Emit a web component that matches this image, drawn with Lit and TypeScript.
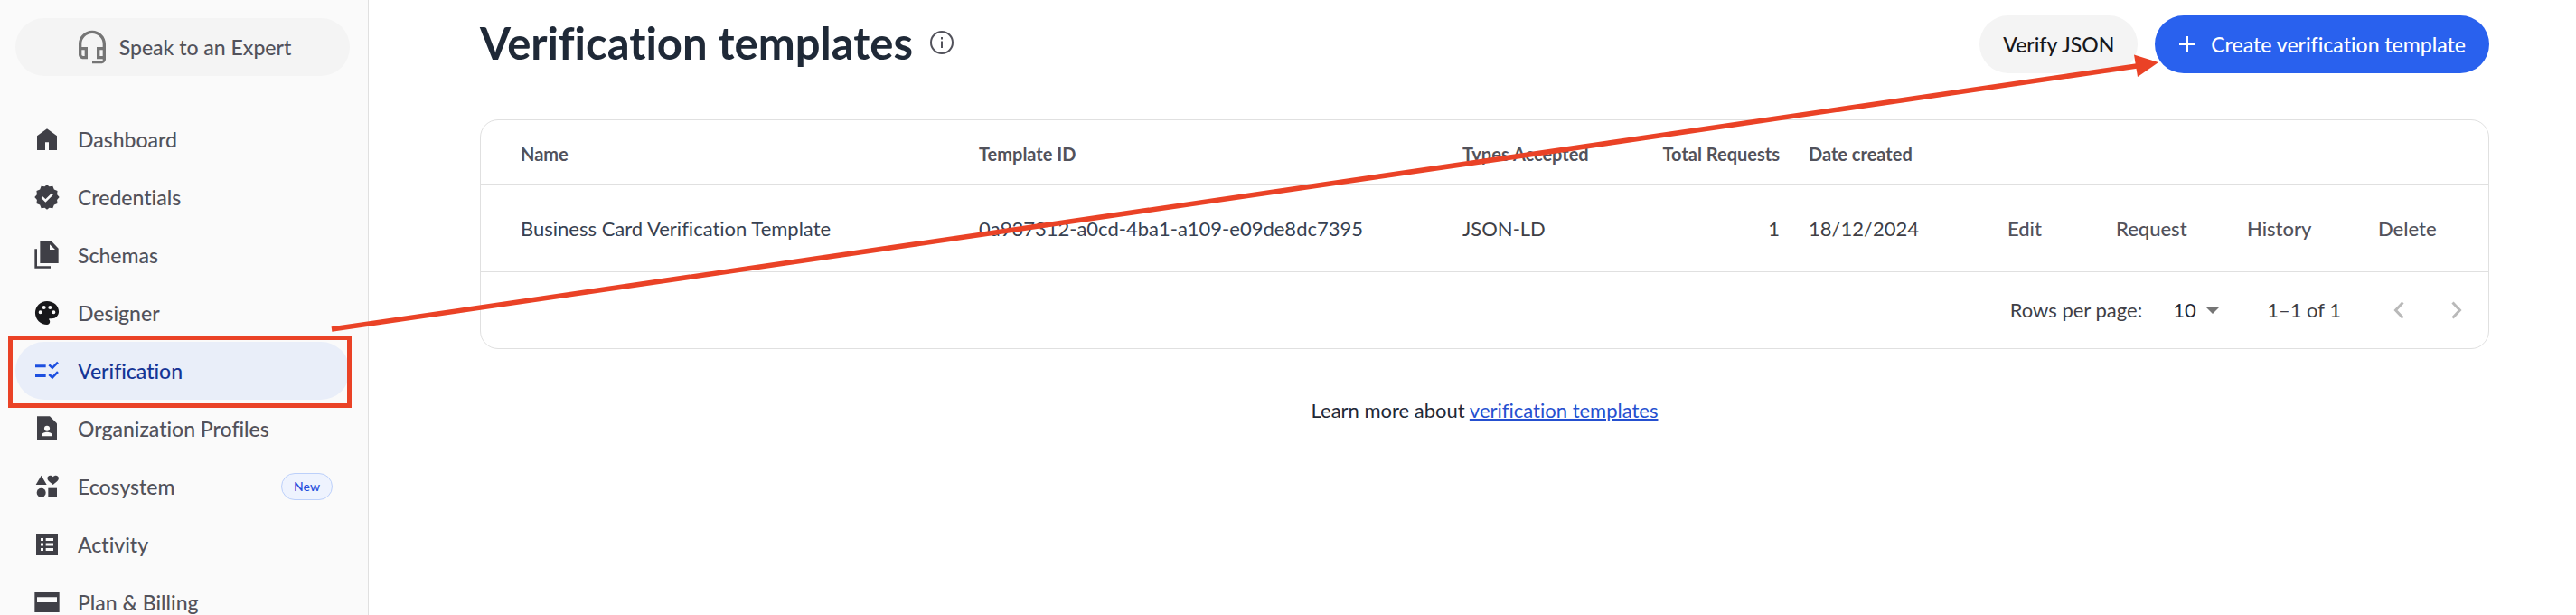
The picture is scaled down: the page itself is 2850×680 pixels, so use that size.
import { LitElement, html, css, svg, nothing } from 'lit';
import type { SVGTemplateResult } from 'lit';
import { customElement, property } from 'lit/decorators.js';
import { classMap } from 'lit/directives/class-map.js';

interface NavItem {
  label: string;
  icon: string;
  active?: boolean;
  badge?: string;
}

const NAV: NavItem[] = [
  { label: 'Dashboard', icon: 'home' },
  { label: 'Credentials', icon: 'verified' },
  { label: 'Schemas', icon: 'files' },
  { label: 'Designer', icon: 'palette' },
  { label: 'Verification', icon: 'rule', active: true },
  { label: 'Organization Profiles', icon: 'profile' },
  { label: 'Ecosystem', icon: 'shapes', badge: 'New' },
  { label: 'Activity', icon: 'list' },
  { label: 'Plan & Billing', icon: 'card' },
];

const ICONS: Record<string, SVGTemplateResult> = {
  home: svg`<path d="M3.75 21V9.25L12 3.25l8.25 6V21H13.5v-6.5h-3V21z"/>`,
  verified: svg`<path transform="translate(.8 .8) scale(.933)" d="M23 12l-2.1-2.5.4-3.2-3-1.2-1.2-3-3.1.4L12 .9 9.9 2.5 6.9 2.1 5.7 5.1l-3 1.2.4 3.2L1 12l2.1 2.5-.4 3.2 3 1.2 1.2 3 3.1-.4L12 23l2.1-1.5 3 .4 1.2-3 3-1.2-.4-3.2z"/><path d="M7.9 12.1l2.9 2.8 5.6-5.5" fill="none" stroke="#fafafa" stroke-width="1.9"/>`,
  files: svg`<path fill-rule="evenodd" d="M6.25.5h9.5l5.75 6v12.25H6.25zM14.25 3.25v4.25h4.5z"/><path d="M1.75 7h2v14.25H15V23H1.75z"/>`,
  palette: svg`<path fill="#18181b" d="M12 2.2C6.5 2.2 2.2 6.6 2.2 12s4.4 9.7 9.8 9.7c1.4 0 2.4-1.1 2.4-2.4 0-.6-.2-1.2-.6-1.6-.1-.1-.2-.3-.2-.4 0-.3.2-.6.5-.6H16c3.3 0 5.8-2.6 5.8-5.8 0-4.9-4.4-8.700-9.800-8.700zM6.500 13a1.500 1.500 0 110-3 1.500 1.500 0 010 3zm3-4a1.500 1.500 0 110-3 1.500 1.500 0 010 3zm5 0a1.500 1.500 0 110-3 1.500 1.500 0 010 3zm3 4a1.500 1.500 0 110-3 1.500 1.500 0 010 3z"/>`,
  rule: svg`<path d="M2.25 7H11v2.25H2.25zM2.25 15H11v2.25H2.25z"/><path d="M13.75 7l2.7 2.6L21 4.9M13.75 15l2.7 2.6L21 12.9" fill="none" stroke="currentColor" stroke-width="1.9"/>`,
  profile: svg`<path d="M3.75 1.75h10.5l6 6v14H3.75z"/><circle cx="12" cy="11.8" r="2.3" fill="#fafafa"/><path fill="#fafafa" d="M7.75 18.25v-1c0-1.7 2.5-2.5 4.25-2.5s4.25.8 4.25 2.5v1z"/>`,
  shapes: svg`<path d="M7.25 2.75l4.5 7.75h-9z"/><path d="M17 10.5l-.8-.7C13.7 7.7 12.3 6.7 12.3 5.1c0-1.3 1-2.3 2.4-2.3.8 0 1.7.4 2.3 1.1.6-.7 1.5-1.1 2.3-1.1 1.4 0 2.4 1 2.4 2.3 0 1.6-1.4 2.6-3.9 4.7z"/><circle cx="7.25" cy="17" r="3.75"/><path d="M13 13.25h7.25v7.25H13z"/>`,
  list: svg`<path d="M3 3h18v18H3z"/><path fill="#fafafa" d="M6.75 6.75H9v2.25H6.75zM6.75 10.9H9v2.25H6.75zM6.75 15H9v2.25H6.75zM11 6.75h6.25v2.25H11zM11 10.9h6.25v2.25H11zM11 15h6.25v2.25H11z"/>`,
  card: svg`<path fill-rule="evenodd" d="M1.75 3.75h20.5v16.5H1.75zM3.75 7.75V12h16.5V7.75z"/>`,
};

@customElement('side-nav')
class SideNav extends LitElement {
  static styles = css`
    :host {
      display: block;
      box-sizing: border-box;
      padding: 20px 20px 0 17px;
      background: #fafafa;
      border-right: 1px solid #e0e0e0;
    }
    .expert,
    .item {
      box-sizing: border-box;
      width: 100%;
      height: 64px;
      border-radius: 32px;
      display: flex;
      align-items: center;
      font: 500 23px/32px Lato, sans-serif;
      font-variant-ligatures: none;
      color: #52525b;
    }
    .expert {
      justify-content: center;
      gap: 10px;
      margin-bottom: 38px;
      padding: 0;
      border: 0;
      background: #f4f4f4;
    }
    .expert svg {
      width: 40px;
      height: 40px;
      fill: #757575;
    }
    .list {
      list-style: none;
      margin: 0;
      padding: 0;
    }
    .entry {
      position: relative;
    }
    .item {
      gap: 18px;
      padding: 0 19px;
      text-decoration: none;
    }
    .item svg {
      flex: none;
      width: 32px;
      height: 32px;
      fill: #3f3f46;
    }
    .label {
      flex: 1;
    }
    .item.active {
      background: #e9eef9;
      color: #153596;
    }
    .item.active svg {
      color: #1d4fe0;
      fill: #1d4fe0;
    }
    .mark {
      position: absolute;
      inset: -7px -2px -9px -8px;
      border: 5px solid #ea4226;
      pointer-events: none;
    }
    .badge {
      border: 1px solid #bcd0fa;
      border-radius: 15px;
      padding: 0 13px;
      background: #eef3fe;
      color: #2550dc;
      font-size: 14px;
      line-height: 28px;
    }
  `;

  render() {
    return html`
      <button class="expert" type="button">
        <svg viewBox="0 0 24 24" aria-hidden="true">
          <path d="M19 14v4h-2v-4h2M7 14v4H6c-.55 0-1-.45-1-1v-3h2m5-13c-4.97 0-9 4.03-9 9v7c0 1.66 1.34 3 3 3h3v-8H5v-2c0-3.87 3.13-7 7-7s7 3.13 7 7v2h-4v8h4v1h-7v2h6c1.66 0 3-1.34 3-3V10c0-4.97-4.03-9-9-9z" />
        </svg>
        Speak to an Expert
      </button>
      <nav>
        <ul class="list">
          ${NAV.map(
            (n) => html`<li class="entry">
              <a class=${classMap({ item: true, active: !!n.active })} href="#" aria-current=${n.active ? 'page' : nothing}>
                <svg viewBox="0 0 24 24" aria-hidden="true">${ICONS[n.icon]}</svg>
                <span class="label">${n.label}</span>
                ${n.badge ? html`<span class="badge">${n.badge}</span>` : nothing}
              </a>
              ${n.active ? html`<span class="mark"></span>` : nothing}
            </li>`,
          )}
        </ul>
      </nav>
    `;
  }
}

interface Template {
  name: string;
  id: string;
  types: string;
  requests: number;
  created: string;
}

@customElement('template-table')
class TemplateTable extends LitElement {
  @property({ attribute: false }) rows: Template[] = [];

  static styles = css`
    :host {
      display: block;
      border: 1px solid #e0e0e0;
      border-radius: 20px;
      font: 400 22px/32px Lato, sans-serif;
      font-variant-ligatures: none;
      color: #3f3f46;
    }
    .table {
      width: 100%;
      table-layout: fixed;
      border-collapse: collapse;
    }
    th,
    td {
      padding: 0 16px;
      text-align: left;
      border-bottom: 1px solid #e0e0e0;
      white-space: nowrap;
    }
    th {
      height: 70px;
      padding-top: 4px;
      box-sizing: border-box;
      font-size: 20px;
      font-weight: 700;
      color: #52525b;
    }
    td {
      height: 97px;
      padding-top: 3px;
      box-sizing: border-box;
    }
    th:first-child,
    td:first-child {
      padding-left: 44px;
    }
    .dark {
      color: #374151;
    }
    .num {
      text-align: right;
    }
    .types {
      width: 188px;
    }
    .total {
      width: 195px;
    }
    .date {
      width: 220px;
    }
    .edit {
      width: 120px;
    }
    .act {
      width: 145px;
    }
    .last {
      width: 138px;
    }
    button {
      border: 0;
      padding: 0;
      background: none;
      font: 500 22px/32px Lato, sans-serif;
      font-variant-ligatures: none;
      color: #52525b;
    }
    .foot {
      display: flex;
      align-items: center;
      justify-content: flex-end;
      height: 84px;
      padding-right: 3px;
    }
    .size {
      position: relative;
      margin: 0 44px 0 34px;
    }
    select {
      appearance: none;
      display: block;
      width: 60px;
      border: 0;
      padding: 0;
      background: none;
      font: 400 22px/32px Lato, sans-serif;
      color: #1f2937;
    }
    .caret {
      position: absolute;
      right: 8px;
      top: 12px;
      width: 16px;
      height: 8px;
      fill: #757575;
      pointer-events: none;
    }
    .range {
      margin-right: 32px;
    }
    .page {
      width: 64px;
      height: 64px;
      display: grid;
      place-items: center;
    }
    .page svg {
      width: 12px;
      height: 20px;
      fill: none;
      stroke: #b9b9b9;
      stroke-width: 3;
    }
  `;

  render() {
    return html`
      <table class="table">
        <colgroup>
          <col /><col />
          <col class="types" /><col class="total" /><col class="date" />
          <col class="edit" /><col class="act" /><col class="act" /><col class="last" />
        </colgroup>
        <thead>
          <tr>
            <th>Name</th>
            <th>Template ID</th>
            <th>Types Accepted</th>
            <th class="num">Total Requests</th>
            <th>Date created</th>
            <th colspan="4" aria-label="Actions"></th>
          </tr>
        </thead>
        <tbody>
          ${this.rows.map(
            (r) => html`<tr>
              <td class="dark">${r.name}</td>
              <td class="dark">${r.id}</td>
              <td>${r.types}</td>
              <td class="num">${r.requests}</td>
              <td>${r.created}</td>
              ${['Edit', 'Request', 'History', 'Delete'].map((a) => html`<td><button type="button">${a}</button></td>`)}
            </tr>`,
          )}
        </tbody>
      </table>
      <div class="foot">
        <label for="rows">Rows per page:</label>
        <span class="size">
          <select id="rows">
            <option>10</option>
            <option>25</option>
            <option>50</option>
          </select>
          <svg class="caret" viewBox="0 0 16 8" aria-hidden="true"><path d="M0 0h16L8 8z" /></svg>
        </span>
        <span class="range">1–1 of 1</span>
        <button class="page" type="button" aria-label="Previous page" disabled>
          <svg viewBox="0 0 12 20" aria-hidden="true"><path d="M10.5 1.5L2.5 10l8 8.5" /></svg>
        </button>
        <button class="page" type="button" aria-label="Next page" disabled>
          <svg viewBox="0 0 12 20" aria-hidden="true"><path d="M1.5 1.5l8 8.5-8 8.5" /></svg>
        </button>
      </div>
    `;
  }
}

@customElement('app-root')
class AppRoot extends LitElement {
  static styles = css`
    :host {
      position: relative;
      display: grid;
      grid-template-columns: 408px minmax(0, 1fr);
      height: 100vh;
      overflow: hidden;
      background: #fff;
      font: 400 22px/32px Lato, sans-serif;
      font-variant-ligatures: none;
      color: #1f2937;
    }
    .main {
      padding: 17px 96px 0 123px;
    }
    .header {
      display: flex;
      align-items: center;
      gap: 19px;
      margin-bottom: 51px;
    }
    .title {
      margin: 0;
      padding-bottom: 4px;
      font-size: 49px;
      font-weight: 700;
      line-height: 60px;
    }
    .info {
      width: 26px;
      height: 26px;
      margin-right: auto;
      padding-bottom: 4px;
      fill: none;
      stroke: #52525b;
      stroke-width: 2;
    }
    .btn {
      display: flex;
      align-items: center;
      gap: 16px;
      height: 64px;
      border: 0;
      border-radius: 32px;
      padding: 0 26px;
      font: 500 23px/32px Lato, sans-serif;
      font-variant-ligatures: none;
      color: #18181b;
      background: #f4f4f4;
    }
    .primary {
      color: #fff;
      background: #2961ee;
    }
    .plus {
      width: 20px;
      height: 20px;
      stroke: #fff;
      stroke-width: 2;
    }
    .more {
      margin: 52px 0 0;
      text-align: center;
    }
    .link {
      color: #2550d0;
      text-decoration-thickness: 2px;
    }
    .arrow {
      position: absolute;
      left: 0;
      top: 0;
      width: 100%;
      pointer-events: none;
      fill: #ea4226;
      stroke: #ea4226;
    }
  `;

  private rows: Template[] = [
    {
      name: 'Business Card Verification Template',
      id: '0a937312-a0cd-4ba1-a109-e09de8dc7395',
      types: 'JSON-LD',
      requests: 1,
      created: '18/12/2024',
    },
  ];

  render() {
    return html`
      <side-nav></side-nav>
      <main class="main">
        <header class="header">
          <h1 class="title">Verification templates</h1>
          <svg class="info" viewBox="0 0 26 26" role="img" aria-label="Information">
            <circle cx="13" cy="13" r="12" />
            <path d="M13 11.5v7.5M13 7v2.5" />
          </svg>
          <button class="btn" type="button">Verify JSON</button>
          <button class="btn primary" type="button">
            <svg class="plus" viewBox="0 0 20 20" aria-hidden="true"><path d="M10 1v18M1 10h18" /></svg>
            Create verification template
          </button>
        </header>
        <template-table .rows=${this.rows}></template-table>
        <p class="more">Learn more about <a class="link" href="#">verification templates</a></p>
      </main>
      <svg class="arrow" viewBox="0 0 2850 680" aria-hidden="true">
        <path d="M367 364L2364 73" stroke-width="5.5" />
        <path d="M2388 69L2361 60.5L2365 85z" stroke="none" />
      </svg>
    `;
  }
}
